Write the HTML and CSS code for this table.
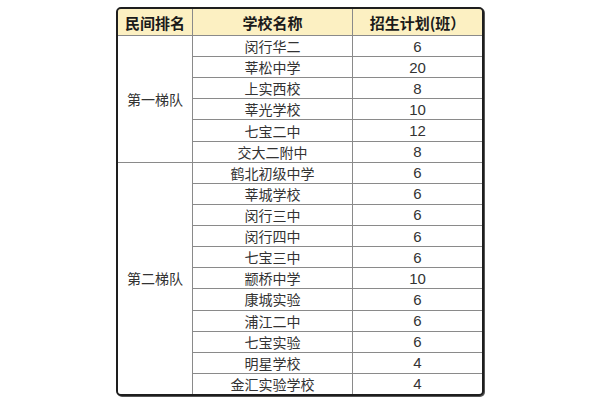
FILE: index.html
```html
<!DOCTYPE html>
<html lang="zh">
<head>
<meta charset="utf-8">
<link rel="stylesheet" href="styles.css">
</head>
<body>
<div class="page">
  <div class="table">
    <div class="cell head">民间排名</div>
    <div class="cell head">学校名称</div>
    <div class="cell head">招生计划(班）</div>

    <div class="cell group g1">第一梯队</div>
    <div class="cell">闵行华二</div><div class="cell num">6</div>
    <div class="cell">莘松中学</div><div class="cell num">20</div>
    <div class="cell">上实西校</div><div class="cell num">8</div>
    <div class="cell">莘光学校</div><div class="cell num">10</div>
    <div class="cell">七宝二中</div><div class="cell num">12</div>
    <div class="cell">交大二附中</div><div class="cell num">8</div>

    <div class="cell group g2">第二梯队</div>
    <div class="cell">鹤北初级中学</div><div class="cell num">6</div>
    <div class="cell">莘城学校</div><div class="cell num">6</div>
    <div class="cell">闵行三中</div><div class="cell num">6</div>
    <div class="cell">闵行四中</div><div class="cell num">6</div>
    <div class="cell">七宝三中</div><div class="cell num">6</div>
    <div class="cell">颛桥中学</div><div class="cell num">10</div>
    <div class="cell">康城实验</div><div class="cell num">6</div>
    <div class="cell">浦江二中</div><div class="cell num">6</div>
    <div class="cell">七宝实验</div><div class="cell num">6</div>
    <div class="cell">明星学校</div><div class="cell num">4</div>
    <div class="cell">金汇实验学校</div><div class="cell num">4</div>
  </div>
</div>
</body>
</html>
```
FILE: styles.css
```css
html, body {
  margin: 0;
  padding: 0;
  background: #ffffff;
}
.page {
  width: 600px;
  height: 400px;
  padding: 7px 0 0 116px;
  box-sizing: border-box;
}
.table {
  width: 368px;
  height: 389px;
  box-sizing: border-box;
  border: 2px solid #1e1e1e;
  border-radius: 5px;
  box-shadow: 1px 1px 0 #555;
  overflow: hidden;
  display: grid;
  grid-template-columns: 74px 159px 1fr;
  grid-template-rows: 26px repeat(17, 1fr);
  gap: 1px;
  background: #8a8a8a;
  font-family: "Noto Sans CJK SC", "Noto Sans", sans-serif;
}
.cell {
  background: #ffffff;
  display: flex;
  align-items: center;
  justify-content: center;
  font-size: 14px;
  color: #333333;
  line-height: 1;
  white-space: nowrap;
}
.head {
  background: #fcf0c2;
  font-weight: bold;
  font-size: 15px;
  color: #1a1a1a;
}
.num {
  font-family: "Liberation Sans", "Noto Sans", sans-serif;
  font-size: 15px;
}
.g1 {
  grid-row: 2 / span 6;
}
.g2 {
  grid-row: 8 / span 11;
}
```
